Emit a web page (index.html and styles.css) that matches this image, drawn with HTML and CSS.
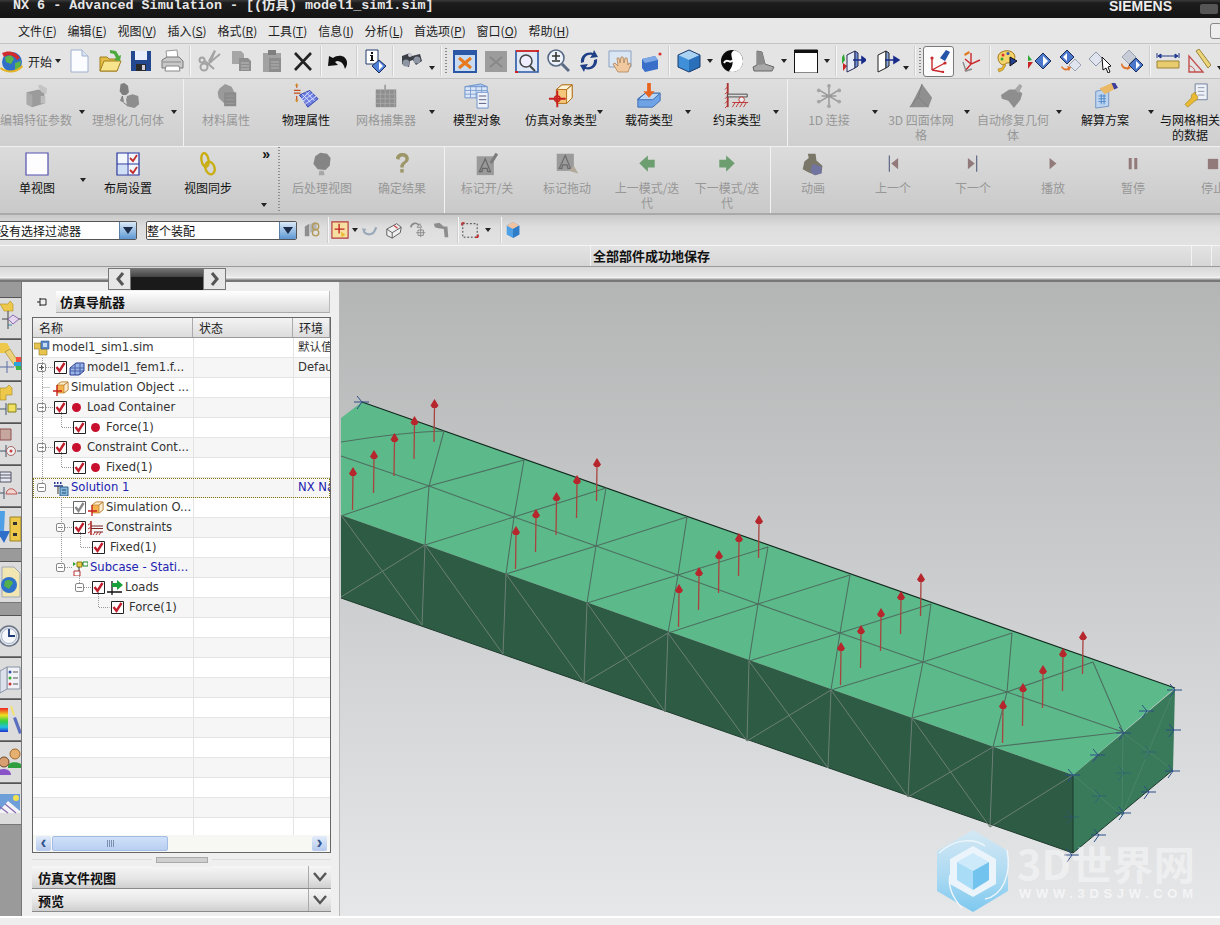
FILE: index.html
```html
<!DOCTYPE html>
<html lang="zh-CN">
<head>
	<meta charset="UTF-8">
	<title>NX 6 - Advanced Simulation</title>
	<link rel="stylesheet" href="styles.css">
</head>
<body>

<svg class="sprite" xmlns="http://www.w3.org/2000/svg">
	<!-- main toolbar -->
	<symbol id="i-globe" viewBox="0 0 24 24"><circle cx="12" cy="13" r="10" fill="#2f6fc8"/><path d="M5 8l6-2 3 4-3 5-5-2zM15 14l6-2-1 6-5 3z" fill="#5cb34a"/><path d="M2 4c6-3 14-2 18 5l-3 2C14 6 8 5 4 8z" fill="#d22b2b"/><path d="M1 18c6 5 14 5 21-2l1 2c-7 7-16 7-23 2z" fill="#e6b422"/></symbol>
	<symbol id="i-new" viewBox="0 0 24 24"><path d="M4 1h11l6 6v16H4z" fill="#fbfcff" stroke="#9fb0cc"/><path d="M15 1v6h6" fill="#d9e2f2" stroke="#9fb0cc"/></symbol>
	<symbol id="i-open" viewBox="0 0 24 24"><path d="M2 8h7l2 2h8v12H2z" fill="#e5bc45" stroke="#a07f1e"/><path d="M2 22l4-10h17l-4 10z" fill="#f8e48c" stroke="#a07f1e"/><path d="M12 1l6 1 3 5 2-1-1 6-6-1 2-2-2-4-4-1z" fill="#4fa83d"/></symbol>
	<symbol id="i-save" viewBox="0 0 24 24"><path d="M2 2h20v20H2z" fill="#24488f"/><path d="M6 2h12v9H6z" fill="#e8eefb"/><path d="M7 15h10v7H7z" fill="#2a2a2a"/><path d="M13 16h3v5h-3z" fill="#ccd"/></symbol>
	<symbol id="i-print" viewBox="0 0 24 24"><path d="M6 2l11-1 1 9H7z" fill="#fff" stroke="#999"/><path d="M2 11l5-3h12l4 4v7H2z" fill="#c8c8c8" stroke="#777"/><path d="M6 17h13l1 5H5z" fill="#fff" stroke="#888"/><path d="M3 13h18" stroke="#888"/></symbol>
	<symbol id="i-cut" viewBox="0 0 24 24"><g fill="none" stroke="#a3a3a3" stroke-width="2"><circle cx="6" cy="18" r="3.5"/><circle cx="3" cy="8" r="2.5" transform="translate(1 3)"/><path d="M9 16L22 5M7 12l9 8" /></g><path d="M10 12L16 1l2 1-5 12z" fill="#a3a3a3"/></symbol>
	<symbol id="i-copy" viewBox="0 0 24 24"><path d="M3 2h9l3 3v10H3z" fill="#a6a6a6"/><path d="M10 9h9l3 3v10H10z" fill="#8f8f8f"/><path d="M12 14h8M12 17h8M12 20h8" stroke="#bbb"/></symbol>
	<symbol id="i-paste" viewBox="0 0 24 24"><path d="M3 4h18v19H3z" fill="#a2a2a2"/><path d="M8 1h8v5H8z" fill="#7f7f7f"/><path d="M9 9h12v14H9z" fill="#8d8d8d"/><path d="M11 13h8M11 16h8M11 19h8" stroke="#b4b4b4"/></symbol>
	<symbol id="i-close" viewBox="0 0 24 24"><path d="M4 4l16 17M20 4L4 21" stroke="#222" stroke-width="2.6"/></symbol>
	<symbol id="i-undo" viewBox="0 0 24 24"><path d="M6 9c5-4 13-3 14 4 .4 3-1 5-2 7-1-4-3-8-8-8l-2 1 3 3-10 1 1-10z" fill="#111"/></symbol>
	<symbol id="i-info" viewBox="0 0 24 24"><path d="M3 1h12v14H3z" fill="#fff" stroke="#23386b"/><path d="M8 3h2v2H8zM7 6h3v5h1v1H7v-1h1V7H7z" fill="#111"/><path d="M16 11l7 6-7 7-7-7z" fill="#4f7fd6" stroke="#1d2d5a"/><path d="M16 13l4 4-4 4z" fill="#fff"/></symbol>
	<symbol id="i-binoc" viewBox="0 0 24 24"><path d="M3 7l8-3 2 3 8-2 2 7-6 4-3-5-3 1-1 6-7-3z" fill="#3b3f46"/><circle cx="7" cy="14" r="3.5" fill="#8d95a3"/><circle cx="18" cy="11" r="3.5" fill="#8d95a3"/><circle cx="11" cy="6" r="2" fill="#c9ccd2"/></symbol>
	<symbol id="i-fit" viewBox="0 0 24 24"><path d="M1 2h22v21H1z" fill="#c7dcf3" stroke="#2a58a6" stroke-width="2"/><path d="M1 2h22v4H1z" fill="#2a58a6"/><path d="M6 9l12 10M18 9L6 19" stroke="#e8791d" stroke-width="3"/></symbol>
	<symbol id="i-fitg" viewBox="0 0 24 24"><path d="M1 2h22v21H1z" fill="#9c9c9c"/><path d="M6 8l12 10M18 8L6 18" stroke="#888" stroke-width="2"/></symbol>
	<symbol id="i-zoomw" viewBox="0 0 24 24"><path d="M1 2h22v21H1z" fill="#dfe9f7" stroke="#2a58a6" stroke-width="1.6"/><path d="M1 2h22" stroke="#c33" stroke-width="2"/><circle cx="11" cy="12" r="6" fill="#eef" stroke="#444" stroke-width="1.5"/><path d="M15 17l5 5" stroke="#444" stroke-width="2"/><path d="M0 23h3M21 2h3" stroke="#c22" stroke-width="2"/></symbol>
	<symbol id="i-zoom" viewBox="0 0 24 24"><circle cx="10" cy="9" r="8" fill="#eef3fb" stroke="#5a6a85" stroke-width="1.6"/><path d="M6 7h8M10 3v8M6 12h8" stroke="#333" stroke-width="1.6"/><path d="M16 15l7 7" stroke="#5a6a85" stroke-width="3"/></symbol>
	<symbol id="i-rotate" viewBox="0 0 24 24"><path d="M4 14C3 7 9 2 16 4l1-3 4 7-8 1 2-3c-5-1-8 2-8 7zM20 10c1 7-5 12-12 10l-1 3-4-7 8-1-2 3c5 1 8-2 8-7z" fill="#1f3f86"/></symbol>
	<symbol id="i-pan" viewBox="0 0 24 24"><path d="M1 2h22v16H1z" fill="#dbe6f5" stroke="#8aa0c2"/><path d="M10 23l-5-8 2-1 3 3-1-8h2l1 5 1-6h2l1 6 1-5h2l1 7 1-2 2 1-3 8z" fill="#f1c9a0" stroke="#a67a4e" stroke-width=".7"/></symbol>
	<symbol id="i-part" viewBox="0 0 24 24"><path d="M3 10l13-3 3 4v9l-13 3-3-4z" fill="#3a6fc9"/><path d="M3 10l13-3 3 4-13 3z" fill="#7fa9e6"/><circle cx="21" cy="5" r="1.6" fill="#d33"/></symbol>
	<symbol id="i-cube" viewBox="0 0 24 24"><path d="M12 1l11 5v12l-11 5-11-5V6z" fill="#3f8fd9"/><path d="M12 1l11 5-11 5L1 6z" fill="#a9d2f3"/><path d="M12 11l11-5v12l-11 5z" fill="#2a6fb9"/><path d="M12 1l11 5v12l-11 5-11-5V6z" fill="none" stroke="#1d3d6d"/></symbol>
	<symbol id="i-bw" viewBox="0 0 24 24"><circle cx="12" cy="12" r="11" fill="#0b0b0b"/><path d="M12 1c-7 6 6 9-1 22 9 0 12-6 12-11S19 1 12 1z" fill="#fff" transform="rotate(12 12 12)"/><path d="M4 14c3-6 6 2 9-3" stroke="#fff" stroke-width="2" fill="none"/></symbol>
	<symbol id="i-shade" viewBox="0 0 24 24"><path d="M6 2l5 1 3 12 9 3-2 4H3l-1-4 4-2z" fill="#a8a8a8" stroke="#666"/><path d="M6 2l5 1 3 12-8 1z" fill="#8c8c8c"/></symbol>
	<symbol id="i-blank" viewBox="0 0 24 24"><path d="M.5 1h23v23H.5z" fill="#fff" stroke="#111"/><path d="M.5 1h23v3H.5z" fill="#111"/></symbol>
	<symbol id="i-blockg" viewBox="0 0 24 24"><path d="M2 5l-2 3v7l3-4z" fill="#2fa835"/><path d="M1 14l4 3-4 5z" fill="#c92424"/><path d="M5 6l8-4v17l-8 4z" fill="#e6edf8" stroke="#2a2a55"/><path d="M13 2l3 2v13l-3 2z" fill="#6d8fd6" stroke="#2a2a55"/><path d="M11 11h9M20 8l4 3-4 3z" stroke="#1a2c8a" stroke-width="1.6" fill="#1a2c8a"/></symbol>
	<symbol id="i-blockb" viewBox="0 0 24 24"><path d="M2 6l8-4v17l-8 4z" fill="#fff" stroke="#222"/><path d="M10 2l3 2v13l-3 2z" fill="#88a8e2" stroke="#222"/><path d="M9 11h10M18 8l5 3-5 3z" stroke="#1a2c8a" stroke-width="1.6" fill="#1a2c8a"/></symbol>
	<symbol id="i-wcs" viewBox="0 0 24 24"><path d="M5 21V9M5 21l13-7M5 21l11 2" stroke="#c9282d" stroke-width="1.4" fill="none"/><circle cx="5" cy="9" r="1.6" fill="#c9282d"/><circle cx="18" cy="14" r="1.6" fill="#c9282d"/><circle cx="16" cy="23" r="1.2" fill="#c9282d"/><path d="M13 9l6-8 4 2-5 9z" fill="#2652a8"/></symbol>
	<symbol id="i-wcsg" viewBox="0 0 24 24"><path d="M5 22l6-7 9-4M11 15V4M5 10l6 5" stroke="#c9282d" stroke-width="1.4" fill="none"/><path d="M3 13l3 9 6-2" stroke="#8c8c8c" stroke-width="1.4" fill="none"/><path d="M4 5l5-3 1 2-5 3z" fill="#e07a20"/></symbol>
	<symbol id="i-palette" viewBox="0 0 24 24"><path d="M2 8c0-6 12-9 16-3 3 5-2 9-7 9-2 0-2 2-3 2-3 0-6-3-6-8z" fill="#f3d36a" stroke="#a27a1a"/><circle cx="7" cy="6" r="1.5" fill="#d33"/><circle cx="12" cy="4.500" r="1.5" fill="#35a"/><circle cx="6" cy="10" r="1.500" fill="#3a3"/><path d="M14 8l7 4-7 5z" fill="#25408f" stroke="#111"/><path d="M8 15l-2 4-4 1 1 3 4-2 3-5z" fill="#e8b92d" stroke="#a27a1a" stroke-width=".6"/></symbol>
	<symbol id="i-dia" viewBox="0 0 24 24"><path d="M1 6l4 5-4 1z" fill="#2fa835"/><path d="M1 13l5 0-5 7z" fill="#c92424"/><path d="M16 4l8 8-8 8-8-8z" fill="#4c78cc" stroke="#1d2d5a"/><path d="M16 7l5 5-5 5z" fill="#fff"/></symbol>
	<symbol id="i-dia2" viewBox="0 0 24 24"><path d="M9 1l7 7-7 7-7-7z" fill="#4c78cc" stroke="#1d2d5a"/><path d="M5 8l4-4v8z" fill="#fff"/><path d="M17 10l6 6-6 6-6-6z" fill="#dfe4ee" stroke="#9aa3b5"/><path d="M4 17c2 3 4 3 6 2l-1-2 4 1-2 4-1-1c-3 1-5 0-7-3z" fill="#e0752a"/></symbol>
	<symbol id="i-diac" viewBox="0 0 24 24"><path d="M7 3l7 7-7 7-7-7z" fill="#dfe4ee" stroke="#8e97aa"/><path d="M13 8l9 9-3 1 2 5-2 1-2-5-3 2z" fill="#fff" stroke="#111"/></symbol>
	<symbol id="i-dia3" viewBox="0 0 24 24"><path d="M9 1l7 7-7 7-7-7z" fill="#c8ccd6" stroke="#9aa3b5"/><path d="M16 9l7 7-7 7-7-7z" fill="#4c78cc" stroke="#1d2d5a"/><path d="M16 12l4 4-4 4z" fill="#fff"/><path d="M2 14c1 4 4 5 6 4v-2l3 3-4 2v-1c-3 1-6-2-6-5z" fill="#e0752a"/></symbol>
	<symbol id="i-ruler" viewBox="0 0 24 24"><path d="M1 12h22v7H1z" fill="#e8cc6d" stroke="#9c8335"/><path d="M2 7h20M2 7l3-2v4zM22 7l-3-2v4z" stroke="#233a8c" fill="#233a8c"/><path d="M1 4v5M23 4v5" stroke="#233a8c"/></symbol>
	<symbol id="i-angle" viewBox="0 0 24 24"><path d="M2 23V7l14 16z" fill="none" stroke="#c0504d" stroke-width="1.4"/><path d="M2 17c3 0 6 3 6 6" fill="none" stroke="#c0504d"/><path d="M9 2l3-2 12 16-3 3z" fill="#ecd67c" stroke="#9c8335"/></symbol>
	<!-- first ribbon -->
	<symbol id="r-feat" viewBox="0 0 28 28"><path d="M4 10l13-3 6 3v12l-13 4-6-3z" fill="#9b9b9b"/><path d="M4 10l6 3v13l-6-3z" fill="#aaa"/><path d="M16 3l3-1 7 4-1 6-5-2z" fill="#c4c4c4"/><path d="M19 14h5v8h-5z" fill="#bdbdbd"/></symbol>
	<symbol id="r-ideal" viewBox="0 0 28 28"><path d="M6 1l4-1 4 3 1 7-3 3H8L5 9z" fill="#7e7e7e"/><path d="M13 14l6-2 6 2 1 9-5 4-8-2-1-7z" fill="#8e8e8e"/><path d="M8 14l1 6-3-1zM9 21l4 3" stroke="#777" fill="#999"/></symbol>
	<symbol id="r-mat" viewBox="0 0 28 28"><path d="M7 6l6-5 7 3 3 6-2 5h-5l-1 8-4-2-5-5-1-6z" fill="#9a9a9a"/><path d="M12 10h13v15H12z" fill="#8b8b8b"/><path d="M14 14h9M14 18h9M14 22h9" stroke="#9d9d9d"/></symbol>
	<symbol id="r-phys" viewBox="0 0 28 28"><path d="M7 13L18 8l9 9-11 9z" fill="#6f7fe0" stroke="#2c3fa8"/><path d="M10 12l9 9M14 10l9 9M7 15l6 6M22 11l-12 9M18 9L9 18M25 14l-12 9" stroke="#dfe6ff" stroke-width="1"/><path d="M4 1v4M4 14v6M1 8h7M1 11h7" stroke="#c44f1e" stroke-width="1.3"/><path d="M4 0l2 3H2zM4 21l2-3H2z" fill="#d6902a"/></symbol>
	<symbol id="r-mesh" viewBox="0 0 28 28"><path d="M3 7h22v19H3z" fill="#8e8e8e"/><path d="M3 12h22M3 17h22M3 22h22M8 7v19M13 7v19M18 7v19M23 7v19" stroke="#a6a6a6"/><path d="M13 2v5" stroke="#888" stroke-width="1.4"/></symbol>
	<symbol id="r-model" viewBox="0 0 28 28"><path d="M1 4l17-3 7 3-17 3z" fill="#aac6ef" stroke="#6a8fc9"/><path d="M1 4h24v12H1z" fill="#dbe7f8" stroke="#6a8fc9"/><path d="M1 8h24M1 12h24M7 4v12M13 4v12M19 4v12" stroke="#7c9dd0"/><path d="M14 10h12v17H14z" fill="#eef3fb" stroke="#6a8fc9"/><path d="M16 14h8M16 18h8M16 22h8" stroke="#557"/></symbol>
	<symbol id="r-target" viewBox="0 0 28 28"><path d="M9 7l6-5h11v14l-6 6H9z" fill="#f4c77a" stroke="#b06f1a"/><path d="M20 7h-11l6-5h11zM20 7v15l6-6V2z" fill="#fdf2d8" stroke="#b06f1a"/><path d="M10 8v18M1 17h18" stroke="#c81f1f" stroke-width="2"/><circle cx="10" cy="17" r="3" fill="none" stroke="#c81f1f" stroke-width="1.5"/></symbol>
	<symbol id="r-load" viewBox="0 0 28 28"><path d="M2 17l8-6h16v8l-8 7H2z" fill="#6fa3e6" stroke="#3a6bb0"/><path d="M2 18h16l8-7H10z" fill="#bcd7f5" stroke="#3a6bb0"/><path d="M12 0h4v9h4l-6 7-6-7h4z" fill="#e8641e"/></symbol>
	<symbol id="r-cons" viewBox="0 0 28 28"><path d="M4 0v26" stroke="#a33" stroke-width="2"/><path d="M4 4l-3 3M4 9l-3 3M4 14l-3 3M4 19l-3 3M4 24l-3 3M12 21l-3 5M16 21l-3 5M20 21l-3 5M24 21l-3 5" stroke="#c03333"/><path d="M4 12h21v3H4z" fill="#ddd" stroke="#444"/><circle cx="19" cy="18" r="3" fill="#eee" stroke="#b33"/><path d="M9 21h17" stroke="#b33"/></symbol>
	<symbol id="r-one" viewBox="0 0 28 28"><path d="M14 4v20M4 8l20 12M24 8L4 20M6 14h16" stroke="#999" stroke-width="1.6"/><g fill="#a5a5a5"><circle cx="14" cy="3" r="2"/><circle cx="14" cy="25" r="2"/><circle cx="3" cy="8" r="2"/><circle cx="25" cy="8" r="2"/><circle cx="3" cy="20" r="2"/><circle cx="25" cy="20" r="2"/></g></symbol>
	<symbol id="r-tet" viewBox="0 0 28 28"><path d="M2 26L15 1l11 15-4 10z" fill="#8f8f8f"/><path d="M15 1l-4 14 11 11M11 15L2 26" stroke="#7c7c7c" fill="none"/></symbol>
	<symbol id="r-heal" viewBox="0 0 28 28"><path d="M1 13l9-6h8l6 4-2 7-7 9-6-8-7-2z" fill="#8e8e8e"/><path d="M16 7l5-6 3 2-4 8z" fill="#a6a6a6"/></symbol>
	<symbol id="r-sol" viewBox="0 0 28 28"><path d="M4 9l14-3v19l-14 2z" fill="#bcd4ef" stroke="#6f93c2"/><path d="M7 14h8M7 17h8M7 20h8M10 12v11M13 12v11" stroke="#4f86c6"/><path d="M8 6l13-6 3 1 3 4-13 7z" fill="#e9b968"/><path d="M21 0l4-0 3 5-4 2z" fill="#3d3d9e"/></symbol>
	<symbol id="r-wrench" viewBox="0 0 28 28"><path d="M12 1h13v17H12z" fill="#eef1f7" stroke="#6e7e99"/><path d="M15 5h7M15 9h7M15 13h7" stroke="#8896ad"/><path d="M13 12l2 3-1 3-3 2-7 6-3-3 7-7 0-3 2-2 3-1-1 2z" fill="#e9bb35" stroke="#9a7a18" stroke-width=".6"/></symbol>
	<!-- second ribbon -->
	<symbol id="s-single" viewBox="0 0 24 24"><path d="M1 1h22v22H1z" fill="#fdfdff" stroke="#5450b0" stroke-width="1.2"/></symbol>
	<symbol id="s-layout" viewBox="0 0 24 24"><path d="M1 1h22v22H1z" fill="#f2f6fd" stroke="#26359e" stroke-width="1.2"/><path d="M12 1v22M1 12h22" stroke="#26359e"/><path d="M14 6l3 3 4-6M14 18l3 3 4-6" stroke="#c22c2c" stroke-width="1.8" fill="none"/><path d="M2 13h9v9H2z" fill="#cfe0f6"/></symbol>
	<symbol id="s-sync" viewBox="0 0 24 24"><g fill="none" stroke="#c9ae14" stroke-width="2.4"><ellipse cx="9" cy="8" rx="3.500" ry="7" transform="rotate(-10 9 8)"/><ellipse cx="14" cy="16" rx="4.500" ry="6.500" transform="rotate(-18 14 16)"/></g></symbol>
	<symbol id="s-post" viewBox="0 0 28 28"><path d="M6 5l6-4 8 1 4 5-1 9-5 5-9-1-5-6z" fill="#858585"/><path d="M11 22h5l1 5h-7z" fill="#a8a8a8"/></symbol>
	<symbol id="s-q" viewBox="0 0 28 28"><path d="M7 8c0-9 15-9 15 0 0 5-6 5-6 10h-4c0-7 6-6 6-10 0-4-7-4-7 1z" fill="#9c9668"/><path d="M12 20h4v4h-4z" fill="#9c9668"/></symbol>
	<symbol id="s-markt" viewBox="0 0 28 28"><path d="M2 5h20v22H2z" fill="#9a9a9a"/><path d="M12 8l6 15h-3l-1-4H9l-1 4H5z" fill="none" stroke="#666" stroke-width="1.4"/><path d="M17 12l7-11 3 2-7 11z" fill="#7c7c7c"/></symbol>
	<symbol id="s-markd" viewBox="0 0 28 28"><path d="M2 2h20v20H2z" fill="#9b9b9b"/><path d="M12 4l6 15h-3l-1-4H9l-1 4H5z" fill="none" stroke="#6c6c6c" stroke-width="1.4"/><path d="M16 22l6-6 5 9z" fill="#b2a99a"/></symbol>
	<symbol id="s-prevm" viewBox="0 0 28 28"><path d="M5 13l10-9v5h8v9h-8v5z" fill="#6c9e70"/></symbol>
	<symbol id="s-nextm" viewBox="0 0 28 28"><path d="M23 13l-10-9v5H5v9h8v5z" fill="#6c9e70"/></symbol>
	<symbol id="s-anim" viewBox="0 0 28 28"><path d="M8 2l9 0 1 8 7 6-1 8-7 3-8-3-7-4 2-9 5-4z" fill="#7a7768"/><path d="M13 14l11 3v8l-8 2-5-4z" fill="#7274a0"/></symbol>
	<symbol id="s-first" viewBox="0 0 28 28"><path d="M9 4h1.500v19H9z" fill="#66708a"/><path d="M20 7v13l-8-6.500z" fill="#937a7a"/></symbol>
	<symbol id="s-last" viewBox="0 0 28 28"><path d="M19 4h-1.500v19H19z" fill="#66708a"/><path d="M8 7v13l8-6.500z" fill="#937a7a"/></symbol>
	<symbol id="s-play" viewBox="0 0 28 28"><path d="M10 7v13l8-6.500z" fill="#937a7a"/></symbol>
	<symbol id="s-pause" viewBox="0 0 28 28"><path d="M9 7h3.500v13H9zM15.500 7H19v13h-3.500z" fill="#937a7a"/></symbol>
	<symbol id="s-stop" viewBox="0 0 28 28"><path d="M8 8h12v12H8z" fill="#937a7a"/></symbol>
	<!-- selection bar -->
	<symbol id="f-link" viewBox="0 0 20 20"><path d="M2 6l5-3v14H2z" fill="#8e8e8e"/><path d="M8 4l4-3 3 1v8l-7 3z" fill="#b4b4b4"/><circle cx="14" cy="6" r="3.5" fill="none" stroke="#b19a5a" stroke-width="1.500"/><circle cx="14" cy="13" r="3.500" fill="none" stroke="#b19a5a" stroke-width="1.500"/></symbol>
	<symbol id="f-snap" viewBox="0 0 20 20"><path d="M1 1h18v18H1z" fill="#f6dfa0" stroke="#b53d3d" stroke-width="1.300"/><path d="M9 3v11M4 9h11" stroke="#c22020" stroke-width="1.500"/><path d="M11 12l5 3-4 3z" fill="#e8b92d"/></symbol>
	<symbol id="f-back" viewBox="0 0 20 20"><path d="M3 11c2 5 10 5 12 0l2-4" stroke="#9aa9b8" stroke-width="2.500" fill="none"/><path d="M1 8l5 1-3 4z" fill="#9aa9b8"/></symbol>
	<symbol id="f-box" viewBox="0 0 20 20"><path d="M2 9l11-6 5 4-1 6-9 6-6-3z" fill="#efefef" stroke="#555"/><path d="M2 9l6 4 10-6M8 13v6" stroke="#555" fill="none"/><path d="M10 5l4 3" stroke="#c44" stroke-width="1.500"/></symbol>
	<symbol id="f-rot" viewBox="0 0 20 20"><path d="M2 7c1-5 7-6 9-2" stroke="#888" stroke-width="1.800" fill="none"/><path d="M9 7h5l-2-4zM13 8v10M8 13h10M10 10h6v6h-6z" stroke="#888" fill="none"/></symbol>
	<symbol id="f-chain" viewBox="0 0 20 20"><path d="M1 3l6-1 5 4 4 0 1 12h-4l-1-9-6-1-4-1z" fill="#8d8d8d"/></symbol>
	<symbol id="f-rect" viewBox="0 0 20 20"><path d="M2 3h16v15H2z" fill="none" stroke="#333" stroke-dasharray="2 2"/><path d="M1 2h3M1 2v3M19 18h-3M19 18v-3" stroke="#c22020" stroke-width="1.500"/></symbol>
	<symbol id="f-solid" viewBox="0 0 20 20"><path d="M3 5l7-4 7 4v10l-7 4-7-4z" fill="#4d9fe6"/><path d="M3 5l7-4 7 4-7 4z" fill="#f2c1a0"/><path d="M10 9l7-4v10l-7 4z" fill="#2f7dc9"/></symbol>
	<!-- side strip, cut by the left edge -->
	<symbol id="t-1" viewBox="0 0 22 34"><path d="M0 3h8l2-3 3 3v7H4z" fill="#edc84a" stroke="#b19022" stroke-width=".6"/><path d="M2 18h6M14 18h8M8 10v18" stroke="#444"/><path d="M8 18l5-4 6 4-6 5z" fill="#e4d6ef" stroke="#8a6bb0"/><path d="M8 24h4" stroke="#38a"/></symbol>
	<symbol id="t-2" viewBox="0 0 22 34"><path d="M0 0h7l3 5-3 5H0z" fill="#edc84a"/><path d="M5 9l5-3 11 17-4 3z" fill="#edd27a" stroke="#9b8225" stroke-width=".6"/><path d="M14 19h8v4h-8z" fill="#2da4d9"/><path d="M16 23h6v4h-6z" fill="#3bb54a"/><path d="M16 14h6v5h-6z" fill="#f04f3f"/><path d="M0 24h14M7 18v12" stroke="#5a6fa8"/></symbol>
	<symbol id="t-3" viewBox="0 0 22 34"><path d="M0 3h6l3-3 3 3v7H6v5H0z" fill="#edc84a" stroke="#a3861f" stroke-width=".6"/><path d="M0 24h6M17 24h5M6 18v12" stroke="#456"/><path d="M8 19h8v8H8z" fill="#f2e061" stroke="#7f7f20"/></symbol>
	<symbol id="t-4" viewBox="0 0 22 34"><path d="M0 2h11v11H0z" fill="#c6a7a0" stroke="#8e4e4e"/><path d="M0 24h6M17 24h5M6 18v12" stroke="#456"/><circle cx="11" cy="24" r="4.500" fill="#eee" stroke="#a66"/><circle cx="11" cy="24" r="1.500" fill="#c44"/></symbol>
	<symbol id="t-5" viewBox="0 0 22 34"><path d="M0 3h11v10H0z" fill="#e6e9f2" stroke="#556"/><path d="M0 6h11M0 9h11" stroke="#556"/><path d="M0 24h4M18 24h4M4 18v12" stroke="#456"/><path d="M6 25c1-7 9-7 11 0z" fill="#f1d6cf" stroke="#b55"/></symbol>
	<symbol id="t-6" viewBox="0 0 22 34"><path d="M0 0h5l-1 20H0z" fill="#4d9fe6"/><path d="M-3 20h13l-6 12z" fill="#2f6fc9"/><path d="M10 6h11v24H10z" fill="#edc84a" stroke="#9b8225"/><path d="M13 11h4v3h-4zM13 22h4v3h-4z" fill="#333"/></symbol>
	<symbol id="t-7" viewBox="0 0 22 34"><path d="M2 2h12l6 6v24H2z" fill="#f2e7b2" stroke="#9fa8b8"/><circle cx="9" cy="20" r="8" fill="#2f72c9"/><path d="M5 16c3-2 7-1 8 2l-4 6-5-3z" fill="#53b04a"/></symbol>
	<symbol id="t-8" viewBox="0 0 22 34"><circle cx="9" cy="17" r="10" fill="#dfe5ee" stroke="#6b7482" stroke-width="1.500"/><circle cx="9" cy="17" r="7.500" fill="#f5f7fb" stroke="#aeb7c6"/><path d="M9 10v7h6" stroke="#1e3a75" stroke-width="1.800" fill="none"/></symbol>
	<symbol id="t-9" viewBox="0 0 22 34"><path d="M7 6h13v22H7z" fill="#f1f2f7" stroke="#8a93a6"/><path d="M0 10l7-4v22l-7 4z" fill="#dbe0ea" stroke="#8a93a6"/><circle cx="10" cy="11" r="1.500" fill="#35a"/><circle cx="10" cy="17" r="1.500" fill="#3a3"/><circle cx="10" cy="23" r="1.500" fill="#c33"/><path d="M13 11h5M13 17h5M13 23h5" stroke="#555"/></symbol>
	<symbol id="t-10" viewBox="0 0 22 34"><defs><linearGradient id="rainbow" x1="0" y1="0" x2="0" y2="1"><stop offset="0" stop-color="#f02020"/><stop offset=".3" stop-color="#f0e020"/><stop offset=".55" stop-color="#30d040"/><stop offset=".8" stop-color="#20c0e0"/><stop offset="1" stop-color="#2030d0"/></linearGradient></defs><path d="M0 5h8v24H0z" fill="url(#rainbow)"/><path d="M13 15l3-1 6 16-3 1z" fill="#5a6fc0"/><path d="M11 3l3 9" stroke="#f3e16e" stroke-width="2"/></symbol>
	<symbol id="t-11" viewBox="0 0 22 34"><circle cx="15" cy="9" r="5" fill="#e6b070" stroke="#a36a2a"/><path d="M8 21c0-5 13-5 14 0v2H8z" fill="#2f9e3f"/><circle cx="4" cy="17" r="5" fill="#d8a070" stroke="#6d4524"/><path d="M-4 30c0-8 15-8 15 0z" fill="#8a54c8"/></symbol>
	<symbol id="t-12" viewBox="0 0 22 34"><path d="M0 7h20v19H0z" fill="#6f9fd8"/><circle cx="16" cy="11" r="3" fill="#f3e14f"/><path d="M0 23l8-9 12 10v2H0z" fill="#f4f4f8"/><path d="M0 20l8 6M5 17l11 9" stroke="#8a6bb0" stroke-width="1.300"/></symbol>
	<!-- tree icons -->
	<symbol id="n-sim" viewBox="0 0 16 16"><path d="M0 3h7v6h6v6H5V9H0z" fill="#e6c44e" stroke="#8f7a26" stroke-width=".6"/><path d="M7 1h8v8H7z" fill="#5b89c9" stroke="#37578a" stroke-width=".6"/><path d="M9 3h4v4H9z" fill="#c7dbf2"/></symbol>
	<symbol id="n-mesh" viewBox="0 0 16 16"><path d="M1 8l6-5h8v8l-5 4H1z" fill="#9ab5e3" stroke="#2b3f96"/><path d="M1 11h14M6 4v11M11 4v11M1 8h14" stroke="#2b3f96" stroke-width=".7"/></symbol>
	<symbol id="n-simobj" viewBox="0 0 16 16"><path d="M4 5l4-3h7v8l-4 3H4z" fill="#f5b34e" stroke="#b0701f" stroke-width=".6"/><path d="M11 5H4l4-3h7zM11 5v8l4-3V2z" fill="#fdeccb" stroke="#b0701f" stroke-width=".6"/><path d="M4 5v11M0 11h9" stroke="#c82020" stroke-width="1.300"/></symbol>
	<symbol id="n-sol" viewBox="0 0 16 16"><path d="M1 2h1.500v2H1zM4 2h1.500v2H4zM7 2h1.500v2H7z" fill="#23358f"/><path d="M1 6h9" stroke="#23358f" stroke-width="1.500"/><path d="M5 6v8" stroke="#333"/><path d="M7 7h8v9H7z" fill="#86b5d8" stroke="#2f638d"/><path d="M9 10h4M9 13h4" stroke="#1d4f78"/></symbol>
	<symbol id="n-cons" viewBox="0 0 16 16"><path d="M3 1v14" stroke="#a82020" stroke-width="1.500"/><path d="M3 3L0 5M3 7L0 9M3 11L0 13M7 12l-2 3M10 12l-2 3M13 12l-2 3" stroke="#c03030"/><path d="M3 6h12M3 8.500h12M6 12h9" stroke="#7c2626"/></symbol>
	<symbol id="n-sub" viewBox="0 0 16 16"><path d="M2 11h6v5H2z" fill="#fff" stroke="#b33"/><path d="M5 2h5v5H5z" fill="#e8cd42" stroke="#8a7a1c"/><path d="M11 2h5v4h-5z" fill="#fff" stroke="#1c8a2a"/><path d="M7 7v4M10 4h1" stroke="#333"/><path d="M1 2l3 2-3 2z" fill="#30a030"/></symbol>
	<symbol id="n-load" viewBox="0 0 16 16"><path d="M5 1v14M0 12h15" stroke="#111" stroke-width="1.300"/><path d="M5 3h5V0l6 5-6 5V7H5z" fill="#18a03a"/></symbol>
	<symbol id="n-check" viewBox="0 0 13 13"><path d="M.5.5h12v12H.5z" fill="#fff" stroke="#222"/><path d="M2.500 6l3 4 5-8" fill="none" stroke="#c11f2e" stroke-width="2.400"/></symbol>
	<symbol id="n-checkg" viewBox="0 0 13 13"><path d="M.5.5h12v12H.5z" fill="#fff" stroke="#666"/><path d="M2.500 6l3 4 5-8" fill="none" stroke="#888" stroke-width="2.400"/></symbol>
</svg>

<header class="titlebar">
	<span class="titlebar-text">NX 6 - Advanced Simulation - [(仿真) model1_sim1.sim]</span>
	<span class="brand">SIEMENS</span>
	<span class="win-btn"></span>
</header>

<nav class="menubar">
	<span>文件(<u>F</u>)</span><span>编辑(<u>E</u>)</span><span>视图(<u>V</u>)</span><span>插入(<u>S</u>)</span><span>格式(<u>R</u>)</span><span>工具(<u>T</u>)</span><span>信息(<u>I</u>)</span><span>分析(<u>L</u>)</span><span>首选项(<u>P</u>)</span><span>窗口(<u>O</u>)</span><span>帮助(<u>H</u>)</span>
	<span class="menu-min"></span>
</nav>

<div class="toolbar">
	<div class="start">
		<svg class="ic24"><use href="#i-globe"/></svg>
		<span class="start-text">开始</span>
		<i class="tri tri-start"></i>
	</div>
	<b class="tb"><svg class="ic24"><use href="#i-new"/></svg></b>
	<b class="tb"><svg class="ic24"><use href="#i-open"/></svg></b>
	<b class="tb"><svg class="ic24"><use href="#i-save"/></svg></b>
	<b class="tb"><svg class="ic24"><use href="#i-print"/></svg></b>
	<em class="sep sep-wide"></em>
	<b class="tb"><svg class="ic24"><use href="#i-cut"/></svg></b>
	<b class="tb"><svg class="ic24"><use href="#i-copy"/></svg></b>
	<b class="tb"><svg class="ic24"><use href="#i-paste"/></svg></b>
	<b class="tb"><svg class="ic24"><use href="#i-close"/></svg></b>
	<em class="sep"></em>
	<b class="tb"><svg class="ic24"><use href="#i-undo"/></svg></b>
	<em class="sep"></em>
	<b class="tb"><svg class="ic24"><use href="#i-info"/></svg></b>
	<em class="sep"></em>
	<b class="tb"><svg class="ic24"><use href="#i-binoc"/></svg></b>
	<i class="tri tri-low"></i>
	<em class="sep"></em>
	<em class="dots"></em>
	<b class="tb"><svg class="ic24"><use href="#i-fit"/></svg></b>
	<b class="tb"><svg class="ic24"><use href="#i-fitg"/></svg></b>
	<b class="tb"><svg class="ic24"><use href="#i-zoomw"/></svg></b>
	<b class="tb"><svg class="ic24"><use href="#i-zoom"/></svg></b>
	<b class="tb"><svg class="ic24"><use href="#i-rotate"/></svg></b>
	<b class="tb"><svg class="ic24"><use href="#i-pan"/></svg></b>
	<b class="tb"><svg class="ic24"><use href="#i-part"/></svg></b>
	<em class="sep sep-wide"></em>
	<b class="tb"><svg class="ic24"><use href="#i-cube"/></svg></b>
	<i class="tri"></i>
	<b class="tb"><svg class="ic24"><use href="#i-bw"/></svg></b>
	<b class="tb"><svg class="ic24"><use href="#i-shade"/></svg></b>
	<i class="tri"></i>
	<b class="tb"><svg class="ic24"><use href="#i-blank"/></svg></b>
	<i class="tri"></i>
	<em class="sep"></em>
	<b class="tb"><svg class="ic24"><use href="#i-blockg"/></svg></b>
	<b class="tb tb-push"><svg class="ic24"><use href="#i-blockb"/></svg></b>
	<i class="tri tri-low tri-near"></i>
	<em class="sep"></em>
	<em class="dots"></em>
	<b class="tb tb-on"><svg class="ic24"><use href="#i-wcs"/></svg></b>
	<b class="tb tb-nudge"><svg class="ic24"><use href="#i-wcsg"/></svg></b>
	<em class="sep"></em>
	<b class="tb"><svg class="ic24"><use href="#i-palette"/></svg></b>
	<b class="tb"><svg class="ic24"><use href="#i-dia"/></svg></b>
	<b class="tb"><svg class="ic24"><use href="#i-dia2"/></svg></b>
	<b class="tb"><svg class="ic24"><use href="#i-diac"/></svg></b>
	<b class="tb"><svg class="ic24"><use href="#i-dia3"/></svg></b>
	<em class="sep"></em>
	<b class="tb"><svg class="ic24"><use href="#i-ruler"/></svg></b>
	<b class="tb"><svg class="ic24"><use href="#i-angle"/></svg></b>
	<i class="tri tri-low"></i>
</div>

<div class="ribbon ribbon-one">
	<div class="cmd off"><svg class="ic28"><use href="#r-feat"/></svg><span>编辑特征参数</span></div><i class="drop"></i>
	<div class="cmd off"><svg class="ic28"><use href="#r-ideal"/></svg><span>理想化几何体</span></div><i class="drop"></i>
	<em class="rsep"></em>
	<div class="cmd off"><svg class="ic28"><use href="#r-mat"/></svg><span>材料属性</span></div>
	<div class="cmd"><svg class="ic28"><use href="#r-phys"/></svg><span>物理属性</span></div>
	<div class="cmd off"><svg class="ic28"><use href="#r-mesh"/></svg><span>网格捕集器</span></div><i class="drop drop-short"></i>
	<div class="cmd"><svg class="ic28"><use href="#r-model"/></svg><span>模型对象</span></div>
	<div class="cmd cmd-gap"><svg class="ic28"><use href="#r-target"/></svg><span>仿真对象类型</span></div><i class="drop drop-tight"></i>
	<div class="cmd"><svg class="ic28"><use href="#r-load"/></svg><span>载荷类型</span></div><i class="drop drop-tight"></i>
	<div class="cmd"><svg class="ic28"><use href="#r-cons"/></svg><span>约束类型</span></div><i class="drop drop-tight"></i>
	<em class="rsep rsep-thin"></em>
	<div class="cmd off"><svg class="ic28"><use href="#r-one"/></svg><span>1D 连接</span></div><i class="drop"></i>
	<div class="cmd off"><svg class="ic28"><use href="#r-tet"/></svg><span>3D 四面体网<br>格</span></div><i class="drop"></i>
	<div class="cmd off"><svg class="ic28"><use href="#r-heal"/></svg><span>自动修复几何<br>体</span></div><i class="drop"></i>
	<div class="cmd"><svg class="ic28"><use href="#r-sol"/></svg><span>解算方案</span></div><i class="drop"></i>
	<div class="cmd"><svg class="ic28"><use href="#r-wrench"/></svg><span class="label-left">与网格相关<br>的数据</span></div>
</div>

<div class="ribbon ribbon-two">
	<div class="cmd"><svg class="ic28"><use href="#s-single"/></svg><span>单视图</span></div><i class="drop drop-short"></i>
	<div class="cmd"><svg class="ic28"><use href="#s-layout"/></svg><span>布局设置</span></div>
	<div class="cmd"><svg class="ic28"><use href="#s-sync"/></svg><span>视图同步</span></div>
	<div class="overflow"><span class="more">»</span><i class="tri"></i></div>
	<em class="rsep rsep-dots"></em>
	<div class="cmd off"><svg class="ic28"><use href="#s-post"/></svg><span>后处理视图</span></div>
	<div class="cmd off"><svg class="ic28"><use href="#s-q"/></svg><span>确定结果</span></div>
	<em class="rsep rsep-five"></em>
	<div class="cmd off"><svg class="ic28"><use href="#s-markt"/></svg><span>标记开/关</span></div>
	<div class="cmd off"><svg class="ic28"><use href="#s-markd"/></svg><span>标记拖动</span></div>
	<div class="cmd off"><svg class="ic28"><use href="#s-prevm"/></svg><span>上一模式/迭<br>代</span></div>
	<div class="cmd off"><svg class="ic28"><use href="#s-nextm"/></svg><span>下一模式/迭<br>代</span></div>
	<em class="rsep"></em>
	<div class="cmd off"><svg class="ic28"><use href="#s-anim"/></svg><span>动画</span></div>
	<div class="cmd off"><svg class="ic28"><use href="#s-first"/></svg><span>上一个</span></div>
	<div class="cmd off"><svg class="ic28"><use href="#s-last"/></svg><span>下一个</span></div>
	<div class="cmd off"><svg class="ic28"><use href="#s-play"/></svg><span>播放</span></div>
	<div class="cmd off"><svg class="ic28"><use href="#s-pause"/></svg><span>暂停</span></div>
	<div class="cmd off"><svg class="ic28"><use href="#s-stop"/></svg><span>停止</span></div>
</div>

<div class="selbar">
	<div class="combo combo-filter"><span>没有选择过滤器</span><i class="combo-btn"></i></div>
	<div class="combo combo-scope"><span>整个装配</span><i class="combo-btn"></i></div>
	<svg class="ic20"><use href="#f-link"/></svg>
	<em class="sep sep-tall"></em>
	<svg class="ic20"><use href="#f-snap"/></svg>
	<i class="tri"></i>
	<svg class="ic20"><use href="#f-back"/></svg>
	<svg class="ic20"><use href="#f-box"/></svg>
	<svg class="ic20"><use href="#f-rot"/></svg>
	<svg class="ic20"><use href="#f-chain"/></svg>
	<em class="sep sep-tall"></em>
	<svg class="ic20"><use href="#f-rect"/></svg>
	<i class="tri tri-off"></i>
	<em class="sep sep-tall sep-far"></em>
	<svg class="ic20"><use href="#f-solid"/></svg>
</div>

<div class="statusbar">
	<div class="status-left"></div>
	<div class="status-msg">全部部件成功地保存</div>
	<div class="status-cell"></div>
	<div class="status-end"></div>
</div>

<div class="band">
	<div class="tabscroll">
		<span class="tabscroll-btn"><svg viewBox="0 0 10 16"><path d="M8 2L3 8l5 6" fill="none" stroke="#555" stroke-width="3"/></svg></span>
		<span class="tabscroll-track"></span>
		<span class="tabscroll-btn"><svg viewBox="0 0 10 16"><path d="M2 2l5 6-5 6" fill="none" stroke="#555" stroke-width="3"/></svg></span>
	</div>
</div>

<main class="workspace">
	<aside class="strip">
		<div class="strip-cap"></div>
		<div class="strip-btn"><svg class="strip-ic"><use href="#t-1"/></svg></div>
		<div class="strip-btn"><svg class="strip-ic"><use href="#t-2"/></svg></div>
		<div class="strip-btn"><svg class="strip-ic"><use href="#t-3"/></svg></div>
		<div class="strip-btn"><svg class="strip-ic"><use href="#t-4"/></svg></div>
		<div class="strip-btn"><svg class="strip-ic"><use href="#t-5"/></svg></div>
		<div class="strip-btn"><svg class="strip-ic"><use href="#t-6"/></svg></div>
		<div class="strip-btn strip-apart"><svg class="strip-ic"><use href="#t-7"/></svg></div>
		<div class="strip-btn strip-apart"><svg class="strip-ic"><use href="#t-8"/></svg></div>
		<div class="strip-btn"><svg class="strip-ic"><use href="#t-9"/></svg></div>
		<div class="strip-btn"><svg class="strip-ic"><use href="#t-10"/></svg></div>
		<div class="strip-btn"><svg class="strip-ic"><use href="#t-11"/></svg></div>
		<div class="strip-btn"><svg class="strip-ic"><use href="#t-12"/></svg></div>
	</aside>

	<section class="navigator">
		<div class="nav-head">
			<svg class="pin" viewBox="0 0 12 12"><path d="M1 6h3M4 2v8M4 3h6v6H4" fill="none" stroke="#222"/></svg>
			<div class="nav-title">仿真导航器</div>
		</div>

		<div class="tree">
			<div class="tree-head">
				<div class="c-name">名称</div>
				<div class="c-state">状态</div>
				<div class="c-env">环境</div>
			</div>
			<div class="tree-body">
				<svg class="guides" width="120" height="280">
					<path d="M9.500 20V145M9.500 49.500h8M13 29.500h8M13 69.500h8M13 109.500h8M28.500 74V89.500h11M28.500 114V129.500h11M28.500 159V229.500M28.500 169.500h11M32 189.500h8M32 229.500h8M47.500 194V209.500h11M46.500 234V245M65.500 254V269.500h11M51 249.500h8" fill="none" stroke="#999" stroke-dasharray="1 1"/>
				</svg>
				<div class="row"><div class="c-name"><svg class="ic16 in0"><use href="#n-sim"/></svg><span>model1_sim1.sim</span></div><div class="c-state"></div><div class="c-env">默认值</div></div>
				<div class="row alt"><div class="c-name"><i class="exp plus in1"></i><svg class="chk"><use href="#n-check"/></svg><svg class="ic16"><use href="#n-mesh"/></svg><span>model1_fem1.f...</span></div><div class="c-state"></div><div class="c-env">Default</div></div>
				<div class="row"><div class="c-name"><svg class="ic16 in2"><use href="#n-simobj"/></svg><span>Simulation Object ...</span></div><div class="c-state"></div><div class="c-env"></div></div>
				<div class="row alt"><div class="c-name"><i class="exp in1"></i><svg class="chk"><use href="#n-check"/></svg><i class="dot"></i><span>Load Container</span></div><div class="c-state"></div><div class="c-env"></div></div>
				<div class="row"><div class="c-name"><svg class="chk in3"><use href="#n-check"/></svg><i class="dot"></i><span>Force(1)</span></div><div class="c-state"></div><div class="c-env"></div></div>
				<div class="row alt"><div class="c-name"><i class="exp in1"></i><svg class="chk"><use href="#n-check"/></svg><i class="dot"></i><span>Constraint Cont...</span></div><div class="c-state"></div><div class="c-env"></div></div>
				<div class="row"><div class="c-name"><svg class="chk in3"><use href="#n-check"/></svg><i class="dot"></i><span>Fixed(1)</span></div><div class="c-state"></div><div class="c-env"></div></div>
				<div class="row alt row-sel"><div class="c-name"><i class="exp in1"></i><svg class="ic16 after-exp"><use href="#n-sol"/></svg><span class="blue">Solution 1</span></div><div class="c-state"></div><div class="c-env blue">NX Nastran</div></div>
				<div class="row"><div class="c-name"><svg class="chk in3"><use href="#n-checkg"/></svg><svg class="ic16"><use href="#n-simobj"/></svg><span>Simulation O...</span></div><div class="c-state"></div><div class="c-env"></div></div>
				<div class="row alt"><div class="c-name"><i class="exp in4"></i><svg class="chk"><use href="#n-check"/></svg><svg class="ic16"><use href="#n-cons"/></svg><span>Constraints</span></div><div class="c-state"></div><div class="c-env"></div></div>
				<div class="row"><div class="c-name"><svg class="chk in5"><use href="#n-check"/></svg><span class="tight">Fixed(1)</span></div><div class="c-state"></div><div class="c-env"></div></div>
				<div class="row alt"><div class="c-name"><i class="exp in4"></i><svg class="ic16 after-exp"><use href="#n-sub"/></svg><span class="blue">Subcase - Stati...</span></div><div class="c-state"></div><div class="c-env"></div></div>
				<div class="row"><div class="c-name"><i class="exp in6"></i><svg class="chk"><use href="#n-check"/></svg><svg class="ic16"><use href="#n-load"/></svg><span>Loads</span></div><div class="c-state"></div><div class="c-env"></div></div>
				<div class="row alt"><div class="c-name"><svg class="chk in7"><use href="#n-check"/></svg><span class="tight">Force(1)</span></div><div class="c-state"></div><div class="c-env"></div></div>
				<div class="row"><div class="c-name"></div><div class="c-state"></div><div class="c-env"></div></div>
				<div class="row alt"><div class="c-name"></div><div class="c-state"></div><div class="c-env"></div></div>
				<div class="row"><div class="c-name"></div><div class="c-state"></div><div class="c-env"></div></div>
				<div class="row alt"><div class="c-name"></div><div class="c-state"></div><div class="c-env"></div></div>
				<div class="row"><div class="c-name"></div><div class="c-state"></div><div class="c-env"></div></div>
				<div class="row alt"><div class="c-name"></div><div class="c-state"></div><div class="c-env"></div></div>
				<div class="row"><div class="c-name"></div><div class="c-state"></div><div class="c-env"></div></div>
				<div class="row alt"><div class="c-name"></div><div class="c-state"></div><div class="c-env"></div></div>
				<div class="row"><div class="c-name"></div><div class="c-state"></div><div class="c-env"></div></div>
				<div class="row alt"><div class="c-name"></div><div class="c-state"></div><div class="c-env"></div></div>
				<div class="row"><div class="c-name"></div><div class="c-state"></div><div class="c-env"></div></div>
			</div>
			<div class="hscroll">
				<span class="sb-btn">&lsaquo;</span>
				<span class="sb-thumb"><i></i></span>
				<span class="sb-rest"></span>
				<span class="sb-btn">&rsaquo;</span>
			</div>
		</div>

		<div class="splitter"><span></span></div>

		<div class="fold"><span>仿真文件视图</span><svg class="chev" viewBox="0 0 14 10"><path d="M1 1l6 7 6-7" fill="none" stroke="#555" stroke-width="2.400"/></svg></div>
		<div class="fold"><span>预览</span><svg class="chev" viewBox="0 0 14 10"><path d="M1 1l6 7 6-7" fill="none" stroke="#555" stroke-width="2.400"/></svg></div>
	</section>

	<div class="viewport">
		<svg class="scene" viewBox="340 282 880 634" width="880" height="634">
			<defs>
				<g id="arrow">
					<path d="M0 2.500L-.5 38" stroke="#a8443f" stroke-width="1.300" fill="none"/>
					<path d="M0-5l4 6.500-2 2.500h-4l-2-2.500z" fill="#b5272d"/>
				</g>
				<g id="pin"><path d="M-8 0H7M0 0L-5-6M0 0L-5 7" stroke="#2b4f86" fill="none"/></g>
				<linearGradient id="hexfill" x1="0" y1="0" x2="0" y2="1">
					<stop offset="0" stop-color="#d3e9f6"/>
					<stop offset=".55" stop-color="#a8d9f3"/>
					<stop offset="1" stop-color="#74c6f0"/>
				</linearGradient>
			</defs>

			<path d="M341 418L362 402 1175 688 1073 775 341 515z" fill="#5cba8a"/>
			<path d="M341 515L1073 775V853L341 598z" fill="#2d5b44"/>
			<path d="M1073 775L1175 689 1173 770 1073 853z" fill="#397a5b"/>
			<path d="M362 402L1175 688" stroke="#13291f" stroke-width="1.200" fill="none"/>
			<path d="M341 598L1073 853 1173 770" stroke="#1d3a2c" fill="none"/>
			<path d="M1073 775V853" stroke="#1d3a2c" fill="none"/>

			<!-- top face mesh -->
			<path d="M341 442C380 436 410 432 444 431L429 486 425 545M524 460L514 517 506 574M606 488L596 546 587 603M687 517L678 575 668 633M768 547L758 604 749 661M850 575L840 633 831 690M931 604L923 662 912 718M1012 633L1007 692 993 747M1093 662L1123 732M341 456L429 486 514 517 596 546 678 575 758 604 840 633 923 662 1007 692 1123 732M341 516L429 486 524 460M425 545L514 517 606 488M506 574L596 546 687 517M587 603L678 575 768 547M668 633L758 604 850 575M749 661L840 633 931 604M831 690L923 662 1012 633M912 718L1007 692 1093 662M993 747L1123 732" fill="none" stroke="#4d6f60" stroke-width="1.100"/>
			<!-- front face mesh -->
			<path d="M425 545L422 625M506 574L503 654M587 603L584 683M668 633L665 712M749 661L747 741M831 690L828 768M912 718L908 797M993 747L990 827M341 515L422 625M425 545L503 654M506 574L584 683M587 603L665 712M668 633L747 741M749 661L828 768M831 690L908 797M912 718L990 827M425 545L341 597M668 633L584 683M831 690L747 741M993 747L908 797M1073 775L990 827" fill="none" stroke="#6d7f75"/>
			<!-- right face mesh -->
			<path d="M1123 732L1122 815M1073 775L1122 815M1122 815L1172 695M1173 770L1122 732" fill="none" stroke="#4a8567"/>

			<use href="#pin" x="362" y="402"/>
			<use href="#pin" x="1175" y="690"/>
			<use href="#pin" x="1147" y="711"/>
			<use href="#pin" x="1174" y="730"/>
			<use href="#pin" x="1124" y="733"/>
			<use href="#pin" x="1098" y="755"/>
			<use class="faint" href="#pin" x="1150" y="752"/>
			<use href="#pin" x="1073" y="775"/>
			<use href="#pin" x="1173" y="771"/>
			<use class="faint" href="#pin" x="1124" y="773"/>
			<use href="#pin" x="1149" y="792"/>
			<use class="faint" href="#pin" x="1100" y="796"/>
			<use href="#pin" x="1124" y="813"/>
			<use class="faint" href="#pin" x="1072" y="817"/>
			<use href="#pin" x="1099" y="835"/>
			<use href="#pin" x="1072" y="855"/>

			<use href="#arrow" x="353" y="472"/><use href="#arrow" x="374" y="455"/><use href="#arrow" x="394.500" y="438"/><use href="#arrow" x="414.500" y="421"/><use href="#arrow" x="434.500" y="404"/>
			<use href="#arrow" x="516" y="531"/><use href="#arrow" x="536" y="514"/><use href="#arrow" x="556.500" y="497"/><use href="#arrow" x="577" y="480"/><use href="#arrow" x="597" y="463"/>
			<use href="#arrow" x="679" y="589"/><use href="#arrow" x="699" y="572"/><use href="#arrow" x="719" y="555"/><use href="#arrow" x="739" y="538"/><use href="#arrow" x="759" y="520"/>
			<use href="#arrow" x="841" y="647"/><use href="#arrow" x="861" y="630"/><use href="#arrow" x="881" y="613"/><use href="#arrow" x="901" y="596"/><use href="#arrow" x="921" y="578"/>
			<use href="#arrow" x="1003" y="705"/><use href="#arrow" x="1023" y="688"/><use href="#arrow" x="1043" y="670"/><use href="#arrow" x="1063" y="653"/><use href="#arrow" x="1083" y="636"/>

			<!-- watermark -->
			<path d="M973 830L1008 851V891L973 912 937 891V851z" fill="url(#hexfill)" opacity=".92"/>
			<path d="M939 853C955 838 975 838 985 846M1007 850C1012 875 1002 896 985 899M962 908C950 895 948 885 950 875" fill="none" stroke="#eef6fb" stroke-width="1.500"/>
			<path d="M973 846L996 859V884L973 897 950 884V859z" fill="#eaf4fa"/>
			<path d="M973 853L989 862 973 871 957 862z" fill="#cdeafa"/>
			<path d="M957 862L973 871V890L957 880z" fill="#a9dcf6"/>
			<path d="M989 862L973 871V890L989 880z" fill="#72c3ee"/>
			<text class="wm-big" x="1017" y="880" textLength="178" lengthAdjust="spacingAndGlyphs">3D世界网</text>
			<text class="wm-small" x="1019" y="898" textLength="174" lengthAdjust="spacing">WWW.3DSJW.COM</text>
		</svg>
	</div>
</main>

<footer class="bottombar"></footer>

</body>
</html>
```

FILE: styles.css
```css
* {
	box-sizing: border-box;
}

html, body {
	margin: 0;
	padding: 0;
}

body {
	width: 1220px;
	height: 925px;
	overflow: hidden;
	background: #e8e8e8;
	font-family: "Noto Sans CJK SC", "Liberation Sans", sans-serif;
	font-size: 12px;
	color: #111;
}

.sprite {
	position: absolute;
	width: 0;
	height: 0;
}

i, em, b {
	display: block;
	font-style: normal;
	font-weight: normal;
}

.ic24 { width: 24px; height: 24px; display: block; flex: none; }
.ic28 { width: 26px; height: 26px; display: block; }
.ic20 { width: 18px; height: 18px; display: block; flex: none; }
.ic16 { width: 16px; height: 16px; display: block; flex: none; }

/* title bar */
.titlebar {
	height: 18px;
	background: linear-gradient(#3a3a3a 0, #1c1c1c 3px, #141414 100%);
	display: flex;
	align-items: flex-start;
	padding-left: 13px;
	overflow: hidden;
}

.titlebar-text {
	font-family: "Liberation Mono", "Noto Sans CJK SC", monospace;
	font-weight: bold;
	font-size: 13.4px;
	line-height: 12px;
	color: #e8e8e8;
	white-space: pre;
}

.brand {
	margin-left: auto;
	font-family: "Liberation Sans", sans-serif;
	font-weight: bold;
	font-size: 14px;
	line-height: 13px;
	color: #ededed;
}

.win-btn {
	width: 18px;
	height: 10px;
	margin: 4px 2px 0 28px;
	background: #555;
	border-radius: 2px;
}

/* menu */
.menubar {
	height: 26px;
	background: #e7e7e7;
	border-bottom: 1px solid #c4c4c4;
	padding-left: 18px;
	display: flex;
	align-items: center;
	gap: 10.8px;
	line-height: 26px;
	white-space: nowrap;
	color: #222;
}

.menu-min {
	margin-left: auto;
	width: 12px;
	height: 16px;
	margin-right: -2px;
	background: #eee;
	border: 1px solid #888;
	border-radius: 3px;
}

/* main toolbar */
.toolbar {
	height: 35px;
	background: #e4e4e4;
	border-bottom: 1px solid #c2c2c2;
	display: flex;
	align-items: center;
	overflow: hidden;
}

.start {
	width: 63px;
	display: flex;
	align-items: center;
	flex: none;
	white-space: nowrap;
}

.start-text {
	margin-left: 4px;
	color: #222;
}

.tri {
	flex: none;
	width: 0;
	height: 0;
	margin: 0 3px;
	border: 3px solid transparent;
	border-top: 4px solid #222;
	border-bottom: 0;
}

.tri-start {
	margin: 0 0 0 3px;
}

.tri-low {
	margin: 14px 3px 0;
}

.tri-near {
	margin-left: 0;
}

.tb {
	flex: none;
	width: 31px;
	height: 31px;
	display: flex;
	align-items: center;
	justify-content: center;
}

.tb-push {
	margin-left: 3px;
}

.tb-nudge {
	margin-left: 2px;
}

.tb-on {
	background: #fbfbfb;
	border: 1px solid #7a7a7a;
	border-radius: 3px;
}

.sep {
	flex: none;
	width: 1px;
	height: 30px;
	margin: 0 2px;
	background: #cfcfcf;
	box-shadow: 1px 0 0 #f6f6f6;
}

.sep-wide {
	margin-right: 4px;
}

.dots {
	flex: none;
	width: 2px;
	height: 26px;
	margin: 0 2px;
	background: repeating-linear-gradient(#888 0 1px, transparent 1px 3px);
}

/* ribbons */
.ribbon {
	height: 68px;
	display: flex;
	align-items: stretch;
	overflow: hidden;
	background: linear-gradient(#dedede, #cfcfcf);
	border-bottom: 1px solid #f0f0f0;
}

.ribbon-one {
	margin-left: -4px;
	width: 1224px;
}

.ribbon-two {
	margin-left: -3px;
	width: 1223px;
	background: linear-gradient(#dcdcdc, #c9c9c9);
	border-bottom: 2px solid #a9a9a9;
}

.ribbon-two .ic28 {
	width: 24px;
	height: 24px;
	margin-top: 1px;
}

.ribbon-two .cmd span {
	margin-top: 4px;
}

.cmd {
	flex: none;
	width: 80px;
	padding-top: 4px;
	display: flex;
	flex-direction: column;
	align-items: center;
	text-align: center;
	color: #111;
	line-height: 15px;
}

.cmd span {
	margin-top: 3px;
	white-space: nowrap;
}

.cmd span.label-left {
	margin-right: 14px;
}

.cmd.off {
	color: #979797;
}

.cmd-gap {
	margin-left: 4px;
}

.drop {
	flex: none;
	width: 12px;
	position: relative;
}

.drop::after {
	content: "";
	position: absolute;
	left: 3px;
	top: 31px;
	border: 3px solid transparent;
	border-top: 4px solid #222;
	border-bottom: 0;
}

.drop-short {
	width: 11px;
}

.drop-tight {
	width: 8px;
}

.drop-tight::after {
	left: -4px;
}

.rsep {
	flex: none;
	width: 6px;
	margin: 0;
	background: linear-gradient(#f2f2f2, #f2f2f2) center / 1px 100% no-repeat;
}

.rsep-thin {
	width: 4px;
}

.rsep-five {
	width: 5px;
}

.rsep-dots {
	background: repeating-linear-gradient(#8e8e8e 0 1px, transparent 1px 3px) center / 2px 100% no-repeat;
}

.overflow {
	flex: none;
	width: 28px;
	display: flex;
	flex-direction: column;
	align-items: flex-end;
	padding: 0 6px 6px 0;
	justify-content: space-between;
}

.more {
	font-family: "Liberation Sans", sans-serif;
	font-weight: bold;
	font-size: 14px;
	line-height: 14px;
	margin-top: 0;
}

/* selection bar */
.selbar {
	height: 31px;
	background: linear-gradient(#c9c9c9, #dedede 12px, #e2e2e2);
	border-bottom: 1px solid #f5f5f5;
	display: flex;
	align-items: center;
	overflow: hidden;
}

.selbar .ic20 {
	margin: 0 3px;
}

.selbar .tri {
	margin: 0;
}

.selbar .tri-off {
	margin-left: 3px;
}

.sep-tall {
	height: 26px;
	margin: 0 0 0 3px;
}

.sep-far {
	margin-left: 9px;
}

.combo {
	height: 19px;
	flex: none;
	background: #fff;
	border: 1px solid #555;
	border-radius: 2px;
	display: flex;
	align-items: center;
	justify-content: space-between;
	line-height: 17px;
	overflow: hidden;
}

.combo-filter {
	width: 139px;
	margin-left: -2px;
}

.combo-filter span {
	margin-left: -2px;
}

.combo-scope {
	width: 151px;
	margin: 0 3px 0 9px;
}

.combo-btn {
	width: 17px;
	height: 17px;
	background: linear-gradient(#dceaf8, #5d97d2);
	border-left: 1px solid #5b7ea6;
	position: relative;
}

.combo-btn::after {
	content: "";
	position: absolute;
	left: 3px;
	top: 5px;
	border: 5px solid transparent;
	border-top: 7px solid #1c2c48;
	border-bottom: 0;
}

/* status line */
.statusbar {
	height: 21px;
	background: linear-gradient(#e3e3e3, #d6d6d6);
	border-bottom: 1px solid #9a9a9a;
	display: flex;
	line-height: 20px;
}

.status-left {
	width: 590px;
	flex: none;
}

.status-msg {
	flex: 1;
	padding-left: 2px;
	font-weight: bold;
	font-size: 13px;
	border-left: 1px solid #f2f2f2;
	color: #111;
}

.status-cell {
	width: 20px;
	flex: none;
	border-left: 1px solid #f2f2f2;
}

.status-end {
	width: 9px;
	flex: none;
	border-left: 1px solid #f2f2f2;
}

.band {
	height: 15px;
	background: linear-gradient(#d8d8d8, #e6e6e6 60%, #f2f2f2 70%, #777 90%);
	position: relative;
}

.tabscroll {
	position: absolute;
	left: 108px;
	top: 1px;
	width: 118px;
	height: 22px;
	display: flex;
	z-index: 2;
}

.tabscroll-btn {
	width: 23px;
	background: #e6e6e6;
	border: 1px solid #777;
	display: flex;
	align-items: center;
	justify-content: center;
}

.tabscroll-btn svg {
	width: 10px;
	height: 16px;
	display: block;
}

.tabscroll-track {
	flex: 1;
	background: linear-gradient(#777, #444 40%, #1a1a1a 41%);
}

/* workspace */
.workspace {
	height: 634px;
	display: flex;
}

.strip {
	width: 22px;
	flex: none;
	background: #9a9a9a;
	border-right: 1px solid #777;
	overflow: hidden;
}

.strip-cap {
	height: 15px;
}

.strip-btn {
	height: 42px;
	width: 21px;
	background: #dcdcdc;
	border-top: 1px solid #555;
	border-bottom: 1px solid #777;
	display: flex;
	align-items: center;
}

.strip-apart {
	margin-top: 12px;
}

.strip-ic {
	width: 22px;
	height: 34px;
	flex: none;
	overflow: visible;
}

.navigator {
	width: 318px;
	flex: none;
	background: #efefef;
	border-right: 1px solid #bbb;
	padding: 9px 9px 0 9px;
}

.nav-head {
	height: 22px;
	display: flex;
	align-items: center;
}

.pin {
	width: 12px;
	height: 12px;
	margin: 0 8px 0 5px;
	flex: none;
}

.nav-title {
	flex: 1;
	height: 22px;
	padding-left: 4px;
	font-weight: bold;
	font-size: 13px;
	line-height: 21px;
	background: linear-gradient(#fff, #d9d9d9);
	border-bottom: 1px solid #aaa;
	border-right: 1px solid #bbb;
}

.tree {
	width: 299px;
	height: 536px;
	margin-top: 4px;
	margin-left: 1px;
	border: 1px solid #666;
	background: #fff;
	display: flex;
	flex-direction: column;
	overflow: hidden;
}

.tree-head {
	height: 20px;
	flex: none;
	display: flex;
	line-height: 19px;
	background: linear-gradient(#f4f4f4, #dcdcdc);
	border-bottom: 1px solid #999;
	color: #222;
}

.tree-head > div {
	border-right: 1px solid #aaa;
	padding-left: 6px;
}

.tree-body {
	flex: 1;
	overflow: hidden;
	position: relative;
}

.guides {
	position: absolute;
	left: 0;
	top: 0;
}

.row {
	height: 20px;
	display: flex;
	border-bottom: 1px solid #e4e4e4;
	background: #fff;
	font-family: "DejaVu Sans", "Noto Sans CJK SC", sans-serif;
	font-size: 11.6px;
	line-height: 19px;
	color: #333;
}

.row.alt {
	background: #f6f6f6;
}

.c-name {
	width: 160px;
	flex: none;
	display: flex;
	align-items: center;
	white-space: nowrap;
	overflow: hidden;
}

.c-state {
	width: 100px;
	flex: none;
}

.c-env {
	flex: 1;
	padding-left: 4px;
	overflow: hidden;
	white-space: nowrap;
}

.row > div + div {
	border-left: 1px solid #e4e4e4;
}

.tree-head .c-name { display: block; }

.row-sel {
	outline: 1px dotted #8a7a10;
	outline-offset: -1px;
}

.blue {
	color: #2222b0;
}

.exp {
	flex: none;
	width: 9px;
	height: 9px;
	border: 1px solid #888;
	border-radius: 2px;
	background: linear-gradient(#888, #888) center / 5px 1px no-repeat, #fff;
}

.exp.plus {
	background: linear-gradient(#555, #555) center / 5px 1px no-repeat, linear-gradient(#555, #555) center / 1px 5px no-repeat, #fff;
}

.chk {
	width: 13px;
	height: 13px;
	flex: none;
	margin: 0 3px 0 0;
}

.exp + .chk { margin-left: 8px; }
.exp + .after-exp { margin-left: 7px; }

.c-name > .ic16 { margin-right: 2px; }
.c-name > .chk + .ic16 { margin-left: -1px; }

.dot {
	width: 9px;
	height: 9px;
	flex: none;
	margin: 0 6px 0 2px;
	border-radius: 50%;
	background: #c8102e;
}

.c-name .tight { margin-left: 2px; }

.c-name > .in0 { margin-left: 1px; }
.in1 { margin-left: 4px; }
.c-name > .in2 { margin-left: 20px; }
.in3 { margin-left: 40px; }
.in4 { margin-left: 23px; }
.in5 { margin-left: 59px; }
.in6 { margin-left: 42px; }
.in7 { margin-left: 78px; }

.hscroll {
	height: 17px;
	flex: none;
	display: flex;
	align-items: center;
	padding: 0 3px;
	gap: 1px;
	background: #f7f7f4;
}

.sb-btn {
	width: 15px;
	height: 15px;
	flex: none;
	background: linear-gradient(#e3ecfa, #b4c9ec);
	border-radius: 2px;
	font-family: "Liberation Sans", sans-serif;
	font-weight: bold;
	font-size: 18px;
	line-height: 12px;
	text-align: center;
	color: #33558e;
}

.sb-thumb {
	width: 116px;
	height: 15px;
	flex: none;
	background: linear-gradient(#cfe0f8, #b9cff2);
	border: 1px solid #a3bce6;
	border-radius: 2px;
	display: flex;
	align-items: center;
	justify-content: center;
}

.sb-thumb i {
	width: 7px;
	height: 7px;
	background: repeating-linear-gradient(90deg, #7d8fae 0 1px, transparent 1px 2px);
}

.sb-rest {
	flex: 1;
}

.splitter {
	height: 13px;
	margin-left: 1px;
	width: 299px;
	position: relative;
	background: linear-gradient(#ddd, #ddd) center / 100% 1px no-repeat;
	display: flex;
	align-items: center;
	justify-content: center;
}

.splitter span {
	width: 52px;
	height: 6px;
	background: #cfcfcf;
	border: 1px solid #aaa;
	box-shadow: 0 0 0 4px #efefef;
}

.fold {
	width: 299px;
	height: 23px;
	margin-left: 1px;
	display: flex;
	align-items: center;
	justify-content: space-between;
	padding-left: 6px;
	font-weight: bold;
	font-size: 13px;
	background: linear-gradient(#f6f6f6, #e6e6e6 55%, #cfcfcf);
	border-bottom: 1px solid #8a8a8a;
}

.chev {
	width: 23px;
	height: 22px;
	padding: 6px 4px;
	border-left: 1px solid #aaa;
}

/* graphics window */
.viewport {
	flex: 1;
	background: linear-gradient(#b4b5b5, #e6e7e9);
	overflow: hidden;
}

.scene {
	display: block;
}

.faint {
	opacity: .45;
}

.wm-big {
	font-family: "Noto Sans CJK SC", "Liberation Sans", sans-serif;
	font-weight: bold;
	font-size: 40px;
	fill: #fff;
	opacity: .42;
}

.wm-small {
	font-family: "Liberation Sans", sans-serif;
	font-weight: bold;
	font-size: 13px;
	fill: #fff;
	opacity: .6;
}

.bottombar {
	height: 9px;
	background: #eee;
	border-top: 2px solid #fff;
}
```
